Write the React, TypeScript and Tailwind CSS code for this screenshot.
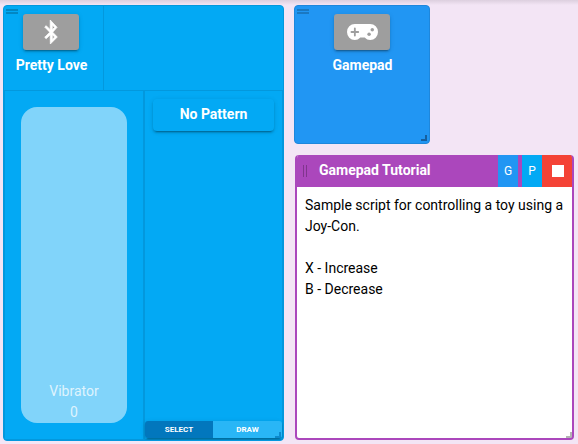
import type { ReactNode } from "react";
import { FaBluetoothB } from "react-icons/fa";

const raised = "shadow-[0_3px_1px_-2px_rgba(0,0,0,.2),0_2px_2px_rgba(0,0,0,.14),0_1px_5px_rgba(0,0,0,.12)]";

function Grip() {
  return (
    <div className="absolute left-[2px] top-[3px] flex w-3 flex-col gap-px">
      <i className="h-[2px] bg-black/20" />
      <i className="h-[2px] bg-black/20" />
    </div>
  );
}

function Corner({ className = "" }: { className?: string }) {
  return <div className={"absolute size-[6px] border-b-2 border-r-2 " + className} />;
}

function GamepadIcon() {
  return (
    <svg viewBox="0 96 640 320" className="h-4 w-[31px]" preserveAspectRatio="none">
      <path
        fill="#fff"
        d="M160 96H480A160 160 0 0 1 480 416C434 416 398 400 366 366H274C242 400 206 416 160 416A160 160 0 0 1 160 96Z"
      />
      <path stroke="#9e9e9e" strokeWidth="38" strokeLinecap="round" d="M92 256H232M162 186V326" />
      <circle cx="456" cy="300" r="36" fill="#9e9e9e" />
      <circle cx="522" cy="212" r="36" fill="#9e9e9e" />
    </svg>
  );
}

function Device({ label, children }: { label: string; children: ReactNode }) {
  return (
    <div className="flex flex-col items-center pt-2 text-white">
      <div className={"flex h-9 w-14 items-center justify-center rounded-[3px] bg-[#9e9e9e] " + raised}>
        {children}
      </div>
      <div className="ml-px mt-[5px] whitespace-nowrap font-bold leading-[21px]">{label}</div>
    </div>
  );
}

export default function App() {
  return (
    <div className="h-[444px] w-[578px] overflow-hidden bg-[#f3e5f5] font-[Roboto,sans-serif] text-[14px] leading-[21px]">
      <div className="flex h-full items-start gap-[10px] bg-[linear-gradient(#dccfde,#f3e5f5_5px)] pl-[3px] pt-[5px]">
        <section className="relative flex h-[436px] w-[281px] flex-col overflow-hidden rounded-[4px] border border-[#0398dd] bg-[#03a9f4]">
          <Grip />
          <div className="flex h-[85px] border-b border-[#0398dd]">
            <div className="w-[100px] border-r border-[#0398dd] pr-[5px]">
              <Device label="Pretty Love">
                <FaBluetoothB className="size-6 overflow-visible stroke-white stroke-[16px]" />
              </Device>
            </div>
          </div>
          <div className="flex min-h-0 flex-1">
            <div className="w-[141px] border-b border-l border-r-2 border-[#0398dd] pl-4 pt-4">
              <div className="flex h-[316px] w-[106px] flex-col justify-end rounded-[16px] bg-[#81d4fa] text-center text-white/75">
                <div>Vibrator</div>
                <div>0</div>
              </div>
            </div>
            <div className="flex flex-1 flex-col justify-between border-b border-r border-[#0398dd]">
              <div className={"mx-2 mt-2 h-8 rounded-[4px] text-center font-bold leading-[31px] text-white " + raised}>No Pattern</div>
              <div className={"mb-px flex h-[17px] overflow-hidden rounded-[3px] text-center text-[8px] font-bold leading-[17px] text-white " + raised}>
                <div className="w-[68px] bg-[#0277bd]">SELECT</div>
                <div className="flex-1 bg-[#29b6f6]">DRAW</div>
              </div>
            </div>
          </div>
          <Corner className="bottom-[2px] right-[2px] border-[#0277bd]/70" />
        </section>

        <div className="flex flex-col gap-[11px]">
          <section className="relative h-[139px] w-[136px] rounded-[4px] border border-[#1e87dc] bg-[#2196f3]">
            <Grip />
            <Device label="Gamepad">
              <GamepadIcon />
            </Device>
            <Corner className="bottom-[2px] right-[2px] border-[#165f9e]" />
          </section>

          <section className="relative ml-px h-[285px] w-[279px] overflow-hidden rounded-[4px] border-x-2 border-b-2 border-[#ab47bc] bg-white">
            <header className="flex h-8 bg-[#ab47bc] text-white">
              <div className="ml-[6px] mt-[10px] flex h-3 w-[6px] gap-[2px]">
                <i className="w-px bg-black/25" />
                <i className="w-px bg-black/25" />
              </div>
              <div className="ml-[10px] flex-1 font-bold leading-[31px]">Gamepad Tutorial</div>
              <div className="w-5 bg-[#2196f3] text-center text-[12px] leading-8">G</div>
              <div className="ml-1 w-5 bg-[#03a9f4] text-center text-[12px] leading-8">P</div>
              <div className="-mr-[2px] flex w-8 items-center justify-center bg-[#f44336]">
                <i className="size-3 bg-white" />
              </div>
            </header>
            <p className="whitespace-pre pl-2 pt-2 text-black">{`Sample script for controlling a toy using a
Joy-Con.

X - Increase
B - Decrease`}</p>
            <Corner className="bottom-0 right-0 border-[#b3b3b3]" />
          </section>
        </div>
      </div>
    </div>
  );
}
